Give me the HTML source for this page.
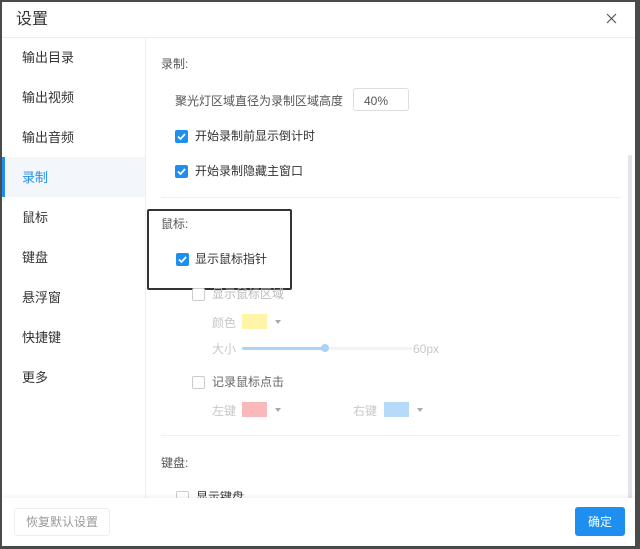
<!DOCTYPE html>
<html><head><meta charset="utf-8"><style>
*{margin:0;padding:0;box-sizing:border-box}
body{width:640px;height:549px;background:#4a4a4a;position:relative;overflow:hidden;font-family:"Liberation Sans","Noto Sans CJK SC",sans-serif;font-size:12px;color:#333}
.dlg{position:absolute;left:2px;top:2px;width:633px;height:544px;background:#fff;overflow:hidden}
.a{position:absolute;white-space:nowrap;line-height:16px}
.cb{position:absolute;width:13px;height:13px;border-radius:2px;background:#1e8ff0}
.cb svg{position:absolute;left:0;top:0}
.ub{position:absolute;width:13px;height:13px;border:1px solid #ccc;border-radius:2px;background:#fff}
.g{color:#c8c8c8}
.sw{position:absolute;width:25px;height:15px}
.tri{position:absolute;width:0;height:0;border-left:3.5px solid transparent;border-right:3.5px solid transparent;border-top:4px solid #aaa}
</style></head><body>
<div class="dlg">
<div class="a" style="left:14px;top:8px;font-size:16px;line-height:20px;color:#333">设置</div>
<svg style="position:absolute;left:604px;top:11px" width="11" height="11"><path d="M1 1L10 10M10 1L1 10" stroke="#555" stroke-width="1.2"/></svg>
<div style="position:absolute;left:0;top:35px;width:633px;height:1px;background:#eee"></div>
<div style="position:absolute;left:143px;top:36px;width:1px;height:460px;background:#eee"></div>
<div style="position:absolute;left:0;top:155px;width:143px;height:40px;background:#f3f7fc"></div>
<div style="position:absolute;left:0;top:155px;width:3px;height:40px;background:#1e8ff0"></div>
<div class="a" style="left:20px;top:48px;font-size:13px">输出目录</div>
<div class="a" style="left:20px;top:88px;font-size:13px">输出视频</div>
<div class="a" style="left:20px;top:128px;font-size:13px">输出音频</div>
<div class="a" style="left:20px;top:168px;font-size:13px;color:#1e8ff0">录制</div>
<div class="a" style="left:20px;top:208px;font-size:13px">鼠标</div>
<div class="a" style="left:20px;top:248px;font-size:13px">键盘</div>
<div class="a" style="left:20px;top:288px;font-size:13px">悬浮窗</div>
<div class="a" style="left:20px;top:328px;font-size:13px">快捷键</div>
<div class="a" style="left:20px;top:368px;font-size:13px">更多</div>

<div class="a" style="left:159px;top:54px;color:#555">录制:</div>
<div class="a" style="left:173px;top:91px;color:#555">聚光灯区域直径为录制区域高度</div>
<div style="position:absolute;left:351px;top:86px;width:56px;height:23px;border:1px solid #ddd;border-radius:3px"></div>
<div class="a" style="left:362px;top:91px;color:#555">40%</div>
<div class="cb" style="left:173px;top:128px"><svg width="13" height="13"><path d="M3 6.5L5.5 9L10 4" stroke="#fff" stroke-width="1.8" fill="none"/></svg></div>
<div class="a" style="left:193px;top:126px">开始录制前显示倒计时</div>
<div class="cb" style="left:173px;top:163px"><svg width="13" height="13"><path d="M3 6.5L5.5 9L10 4" stroke="#fff" stroke-width="1.8" fill="none"/></svg></div>
<div class="a" style="left:193px;top:161px">开始录制隐藏主窗口</div>
<div style="position:absolute;left:159px;top:195px;width:460px;height:1px;background:#f0f0f0"></div>

<div class="a" style="left:159px;top:214px;color:#555">鼠标:</div>
<div class="cb" style="left:174px;top:251px"><svg width="13" height="13"><path d="M3 6.5L5.5 9L10 4" stroke="#fff" stroke-width="1.8" fill="none"/></svg></div>
<div class="a" style="left:193px;top:249px">显示鼠标指针</div>
<div style="position:absolute;left:145px;top:207px;width:145px;height:81px;border:2px solid #333;border-radius:2px"></div>

<div class="ub" style="left:190px;top:286px"></div>
<div class="a g" style="left:210px;top:284px;color:#bbb">显示鼠标区域</div>
<div class="a g" style="left:210px;top:313px">颜色</div>
<div class="sw" style="left:240px;top:312px;background:#fff5a8"></div>
<div class="tri" style="left:273px;top:318px"></div>
<div class="a g" style="left:210px;top:339px">大小</div>
<div style="position:absolute;left:240px;top:345px;width:84px;height:3px;background:#aad3f8;border-radius:2px"></div>
<div style="position:absolute;left:324px;top:345px;width:86px;height:3px;background:#f3f3f3"></div>
<div style="position:absolute;left:319px;top:342px;width:8px;height:8px;border-radius:50%;background:#aad3f8"></div>
<div class="a g" style="left:411px;top:339px">60px</div>
<div class="ub" style="left:190px;top:374px"></div>
<div class="a" style="left:210px;top:372px;color:#666">记录鼠标点击</div>
<div class="a g" style="left:210px;top:401px">左键</div>
<div class="sw" style="left:240px;top:400px;background:#fbb8b8"></div>
<div class="tri" style="left:273px;top:406px"></div>
<div class="a g" style="left:351px;top:401px">右键</div>
<div class="sw" style="left:382px;top:400px;background:#b8dafa"></div>
<div class="tri" style="left:415px;top:406px"></div>
<div style="position:absolute;left:159px;top:433px;width:460px;height:1px;background:#f0f0f0"></div>
<div class="a" style="left:159px;top:453px;color:#555">键盘:</div>
<div class="ub" style="left:174px;top:489px"></div>
<div class="a" style="left:194px;top:487px">显示键盘</div>

<div style="position:absolute;left:626px;top:153px;width:4px;height:343px;background:#e4e4ee"></div>

<div style="position:absolute;left:0;top:496px;width:633px;height:48px;background:#fff;box-shadow:0 -2px 4px rgba(0,0,0,0.05)"></div>
<div style="position:absolute;left:12px;top:506px;width:96px;height:28px;border:1px solid #eee;border-radius:3px"></div>
<div class="a" style="left:24px;top:512px;color:#999">恢复默认设置</div>
<div style="position:absolute;left:573px;top:505px;width:50px;height:29px;background:#1e8ff0;border-radius:3px"></div>
<div class="a" style="left:586px;top:512px;color:#fff">确定</div>
</div>
</body></html>
